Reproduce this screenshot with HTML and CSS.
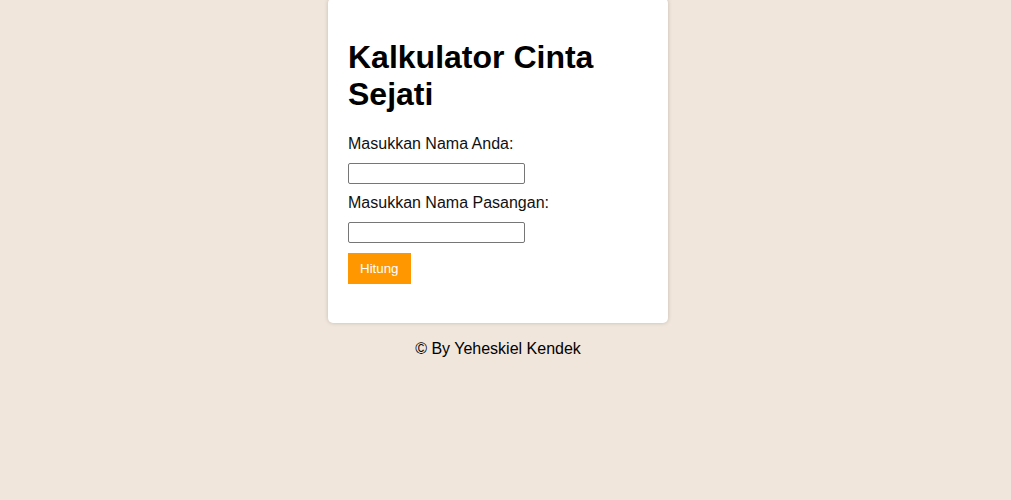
FILE: index.html
```html
<!DOCTYPE html>
<html lang="id">
<head>
<meta charset="utf-8">
<title>Kalkulator Cinta Sejati</title>
<link rel="stylesheet" href="styles.css">
</head>
<body>
<div class="page">
  <div class="card">
    <h1 class="title">Kalkulator Cinta Sejati</h1>
    <label class="label" for="nama1">Masukkan Nama Anda:</label>
    <input class="field" type="text" id="nama1">
    <label class="label" for="nama2">Masukkan Nama Pasangan:</label>
    <input class="field" type="text" id="nama2">
    <button class="btn" type="button">Hitung</button>
  </div>
  <p class="footer">© By Yeheskiel Kendek</p>
</div>
</body>
</html>
```

FILE: styles.css
```css
html, body {
  margin: 0;
  padding: 0;
}
body {
  background: #f0e6db;
  font-family: "Liberation Sans", Arial, sans-serif;
  color: #000;
}
.page {
  width: 996px;
  display: flex;
  flex-direction: column;
  align-items: center;
}
.card {
  box-sizing: border-box;
  width: 340px;
  margin-top: -2px;
  padding: 20px 20px 39px;
  background: #fff;
  border-radius: 5px;
  box-shadow: 0 0 4px rgba(0, 0, 0, 0.18);
  display: flex;
  flex-direction: column;
  align-items: flex-start;
}
.title {
  font-size: 32px;
  font-weight: bold;
  margin: 21px 0 22px;
  line-height: 37px;
}
.label {
  display: block;
  font-size: 16px;
  line-height: 18px;
  margin-bottom: 10px;
  color: #111;
}
.field {
  box-sizing: border-box;
  width: 177px;
  height: 21px;
  margin: 0 0 10px;
  padding: 1px 2px;
  border: 1px solid #767676;
  border-radius: 2px;
  font-size: 13.33px;
  background: #fff;
}
.btn {
  background: #ff9800;
  color: #fff;
  border: none;
  font-family: "Liberation Sans", Arial, sans-serif;
  font-size: 13.33px;
  padding: 8px 12px;
  height: 31px;
  line-height: 15px;
  cursor: pointer;
}
.footer {
  margin: 17px 0 0;
  font-size: 16px;
  line-height: 18px;
}
```
